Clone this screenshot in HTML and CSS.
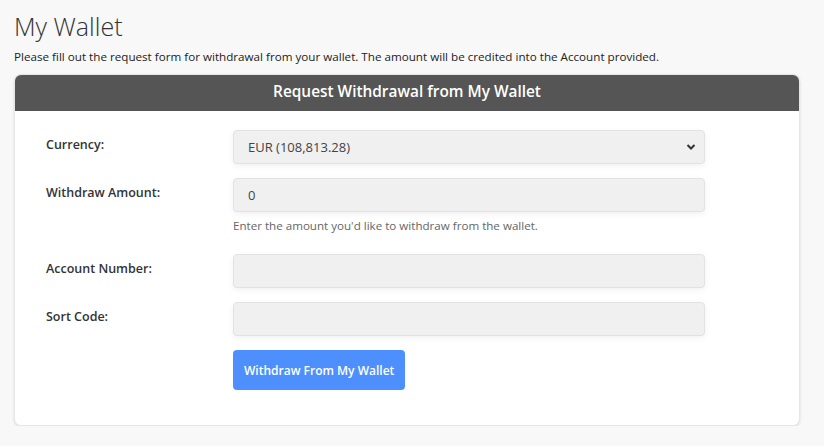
FILE: index.html
```html
<!DOCTYPE html>
<html>
<head>
<meta charset="utf-8">
<link rel="stylesheet" href="styles.css">
</head>
<body>
<div class="page">
  <h1 class="title">My Wallet</h1>
  <p class="intro">Please fill out the request form for withdrawal from your wallet. The amount will be credited into the Account provided.</p>
  <div class="card">
    <div class="card-header">Request Withdrawal from My Wallet</div>
    <form class="card-body">
      <div class="row">
        <label class="label">Currency:</label>
        <div class="field">
          <div class="control select">
            <span>EUR (108,813.28)</span>
            <svg class="chev" width="10" height="8" viewBox="0 0 10 8"><path d="M1.5 2 L5 5.5 L8.5 2" fill="none" stroke="#333" stroke-width="2"/></svg>
          </div>
        </div>
      </div>
      <div class="row">
        <label class="label">Withdraw Amount:</label>
        <div class="field">
          <div class="control">0</div>
          <div class="help">Enter the amount you'd like to withdraw from the wallet.</div>
        </div>
      </div>
      <div class="row">
        <label class="label">Account Number:</label>
        <div class="field"><div class="control"></div></div>
      </div>
      <div class="row">
        <label class="label">Sort Code:</label>
        <div class="field"><div class="control"></div></div>
      </div>
      <div class="row">
        <span class="label"></span>
        <div class="field"><button type="button" class="btn">Withdraw From My Wallet</button></div>
      </div>
    </form>
  </div>
</div>
</body>
</html>
```
FILE: styles.css
```css
html, body {
  margin: 0;
  padding: 0;
  background: #f8f8f8;
}
body {
  font-family: "Open Sans", sans-serif;
  color: #333;
}
.page {
  padding: 8px 24px 0 14px;
}
.title {
  margin: 0;
  font-size: 25px;
  font-weight: 300;
  line-height: 36px;
  color: #333;
}
.intro {
  margin: 4px 0 0;
  font-size: 11.65px;
  line-height: 18px;
  color: #222;
}
.card {
  margin-top: 8px;
  background: #fff;
  border-radius: 7px;
  box-shadow: 0 1px 3px rgba(0,0,0,0.12);
  border: 1px solid #e6e6e6;
  overflow: hidden;
}
.card-header {
  background: #555;
  color: #fff;
  text-align: center;
  font-size: 15.4px;
  font-weight: 600;
  height: 36px;
  line-height: 34px;
}
.card-body {
  display: flex;
  flex-direction: column;
  gap: 14px;
  padding: 19px 94px 35px 31px;
}
.row {
  display: grid;
  grid-template-columns: 187px 1fr;
}
.label {
  font-size: 12.5px;
  font-weight: 600;
  color: #333;
  padding-top: 6px;
}
.control {
  height: 34px;
  box-sizing: border-box;
  border: 1px solid #e2e2e2;
  border-radius: 4px;
  background: #f0f0f0;
  box-shadow: 0 2px 6px rgba(0,0,0,0.06);
  font-size: 13px;
  line-height: 32px;
  padding: 0 14px;
  color: #444;
  display: flex;
  align-items: center;
  justify-content: space-between;
}
.select {
  padding-right: 8px;
}
.help {
  font-size: 11.6px;
  color: #666;
  margin-top: 6px;
  margin-bottom: 7px;
}
.btn {
  background: #4d8ffd;
  color: #fff;
  border: none;
  border-radius: 4px;
  font-family: "Open Sans", sans-serif;
  font-size: 12px;
  font-weight: 600;
  height: 40px;
  padding: 0 11px;
  cursor: pointer;
}
```
